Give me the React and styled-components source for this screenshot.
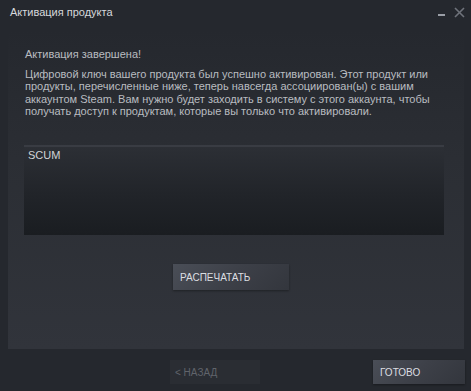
import React from "react";
import styled, { createGlobalStyle } from "styled-components";

const Global = createGlobalStyle`
  html, body { margin: 0; padding: 0; background: #24272d; }
  body { font-family: Arial, "Liberation Sans", sans-serif; }
  * { box-sizing: border-box; }
`;

const Window = styled.div`
  width: 471px;
  height: 391px;
  background: #25282e;
  display: flex;
  flex-direction: column;
  overflow: hidden;
`;

const TitleBar = styled.div`
  height: 27px;
  display: flex;
  align-items: center;
  padding: 0 6px 0 10px;
`;

const Title = styled.div`
  flex: 1;
  font-size: 11px;
  color: #d6d8dc;
  margin-top: -3px;
`;

const Controls = styled.div`
  display: flex;
  align-items: center;
  gap: 8px;
  margin-top: -3px;
`;

const Panel = styled.div`
  margin: 3px 7px 0 8px;
  height: 319px;
  background: linear-gradient(to bottom, #25282e 0%, #2b2e34 40%, #31343b 100%);
  padding: 17px 17px 0 17px;
  display: flex;
  flex-direction: column;
`;

const Heading = styled.div`
  font-size: 11px;
  color: #b9bcc0;
  line-height: 14px;
`;

const Paragraph = styled.div`
  margin-top: 7px;
  font-size: 11px;
  color: #b9bcc0;
  line-height: 12.3px;
  white-space: nowrap;
`;

const ProductBox = styled.div`
  margin-top: 28px;
  margin-left: -1px;
  width: 420px;
  height: 90px;
  border-top: 2px solid #393c43;
  background: linear-gradient(to bottom, #2c2f35 0%, #212429 55%, #1a1d21 100%);
  padding: 2px 4px;
  font-size: 11px;
  color: #d0d3d7;
`;

const Button = styled.div`
  width: ${(p) => p.$w}px;
  height: ${(p) => p.$h || 24}px;
  display: flex;
  align-items: center;
  padding-left: ${(p) => p.$pl || 7}px;
  font-size: 10px;
  color: ${(p) => (p.$disabled ? "#60646b" : "#dcdee1")};
  background: ${(p) =>
    p.$disabled
      ? "#2a2d33"
      : "linear-gradient(135deg, #4a4e57 0%, #3d4048 50%, #33363d 100%)"};
  box-shadow: ${(p) => (p.$disabled ? "none" : "0 1px 2px rgba(0,0,0,0.35)")};
`;

const PrintRow = styled.div`
  margin-top: 29px;
  display: flex;
  padding-left: 148px;
`;

const Footer = styled.div`
  flex: 1;
  display: flex;
  align-items: flex-start;
  padding: 11px 6px 0 170px;
`;

const Spacer = styled.div`
  flex: 1;
`;

function Minimize() {
  return (
    <svg width="8" height="10" viewBox="0 0 8 10">
      <rect x="0" y="7" width="7" height="2" fill="#9a9ea6" />
    </svg>
  );
}

function Close() {
  return (
    <svg width="11" height="11" viewBox="0 0 11 11">
      <path d="M1 1 L10 10 M10 1 L1 10" stroke="#6f737b" strokeWidth="1.6" />
    </svg>
  );
}

export default function App() {
  return (
    <>
      <Global />
      <Window>
        <TitleBar>
          <Title>Активация продукта</Title>
          <Controls>
            <Minimize />
            <Close />
          </Controls>
        </TitleBar>
        <Panel>
          <Heading>Активация завершена!</Heading>
          <Paragraph>
            Цифровой ключ вашего продукта был успешно активирован. Этот продукт или
            <br />
            продукты, перечисленные ниже, теперь навсегда ассоциирован(ы) с вашим
            <br />
            аккаунтом Steam. Вам нужно будет заходить в систему с этого аккаунта, чтобы
            <br />
            получать доступ к продуктам, которые вы только что активировали.
          </Paragraph>
          <ProductBox>SCUM</ProductBox>
          <PrintRow>
            <Button $w={116} $h={26}>РАСПЕЧАТАТЬ</Button>
          </PrintRow>
        </Panel>
        <Footer>
          <Button $w={90} $disabled $pl={5}>&lt; НАЗАД</Button>
          <Spacer />
          <Button $w={92}>ГОТОВО</Button>
        </Footer>
      </Window>
    </>
  );
}
